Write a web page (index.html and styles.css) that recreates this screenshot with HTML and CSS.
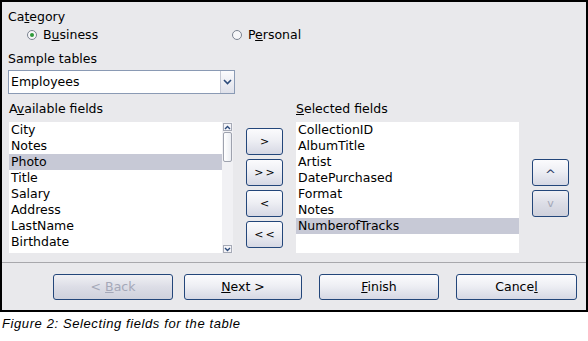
FILE: index.html
```html
<!DOCTYPE html>
<html>
<head>
<meta charset="utf-8">
<link rel="stylesheet" href="styles.css">
</head>
<body>
<div class="dialog">
  <div class="content">
    <div class="label">Ca<u>t</u>egory</div>
    <div class="radios">
      <div class="radio first"><span class="dot on"></span><span>B<u>u</u>siness</span></div>
      <div class="radio"><span class="dot"></span><span>P<u>e</u>rsonal</span></div>
    </div>
    <div class="label sample">Sample tables</div>
    <div class="select">
      <span class="value">Employees</span>
      <span class="sbtn"><svg width="9" height="6" viewBox="0 0 9 6"><path d="M1 1 L4.5 4.5 L8 1" fill="none" stroke="#2b4a7a" stroke-width="1.6"/></svg></span>
    </div>
    <div class="fields">
      <div class="label">A<u>v</u>ailable fields</div>
      <div></div>
      <div class="label"><u>S</u>elected fields</div>
      <div></div>
      <div class="list left">
        <div class="items">
          <div class="item">City</div>
          <div class="item">Notes</div>
          <div class="item sel">Photo</div>
          <div class="item">Title</div>
          <div class="item">Salary</div>
          <div class="item">Address</div>
          <div class="item">LastName</div>
          <div class="item">Birthdate</div>
        </div>
        <div class="scroll">
          <div class="arrow"><svg width="7" height="5" viewBox="0 0 7 5"><path d="M1 4 L3.5 1.5 L6 4" fill="none" stroke="#2b4a7a" stroke-width="1.4"/></svg></div>
          <div class="thumb"></div>
          <div class="track"></div>
          <div class="arrow"><svg width="7" height="5" viewBox="0 0 7 5"><path d="M1 1 L3.5 3.5 L6 1" fill="none" stroke="#2b4a7a" stroke-width="1.4"/></svg></div>
        </div>
      </div>
      <div class="move">
        <div class="btn small"><span>&gt;</span></div>
        <div class="btn small wide"><span>&gt;&gt;</span></div>
        <div class="btn small"><span>&lt;</span></div>
        <div class="btn small wide"><span>&lt;&lt;</span></div>
      </div>
      <div class="list">
        <div class="items">
          <div class="item">CollectionID</div>
          <div class="item">AlbumTitle</div>
          <div class="item">Artist</div>
          <div class="item">DatePurchased</div>
          <div class="item">Format</div>
          <div class="item">Notes</div>
          <div class="item sel">NumberofTracks</div>
        </div>
      </div>
      <div class="order">
        <div class="btn small up"><span>^</span></div>
        <div class="btn small disabled"><span>v</span></div>
      </div>
    </div>
  </div>
  <div class="footer">
    <div class="btn big disabled back"><span>&lt; <u>B</u>ack</span></div>
    <div class="btn big next"><span><u>N</u>ext &gt;</span></div>
    <div class="btn big finish"><span><u>F</u>inish</span></div>
    <div class="btn big cancel"><span>Cance<u>l</u></span></div>
  </div>
</div>
<div class="caption">Figure 2: Selecting fields for the table</div>
</body>
</html>
```

FILE: styles.css
```css
html, body {
  margin: 0;
  padding: 0;
  background: #ffffff;
}

.dialog {
  box-sizing: border-box;
  width: 588px;
  height: 312px;
  border: 2px solid #000;
  background: #e9e9ec;
  display: flex;
  flex-direction: column;
  font-family: "DejaVu Sans", sans-serif;
  font-size: 12.5px;
  line-height: 14px;
  color: #000;
}

u {
  text-decoration: underline;
  text-underline-offset: 1px;
}

.content {
  padding: 8px 0 0 6px;
}

.label {
  height: 14px;
  white-space: nowrap;
}

.radios {
  display: flex;
  margin-top: 4px;
  padding-left: 19px;
  height: 14px;
}

.radio {
  display: flex;
  align-items: center;
  gap: 6px;
}

.radio.first {
  width: 205px;
}

.dot {
  box-sizing: border-box;
  width: 10px;
  height: 10px;
  border-radius: 50%;
  border: 1px solid #7a8290;
  background: #f6f6f8;
  display: flex;
  align-items: center;
  justify-content: center;
}

.dot.on::after {
  content: "";
  width: 4px;
  height: 4px;
  border-radius: 50%;
  background: #2f9a3a;
}

.sample {
  margin-top: 10px;
}

.select {
  box-sizing: border-box;
  margin-top: 4px;
  width: 227px;
  height: 24px;
  border: 1px solid #8a9ab4;
  background: #fff;
  display: flex;
  align-items: stretch;
}

.select .value {
  flex: 1;
  padding-left: 2px;
  line-height: 21px;
}

.sbtn {
  width: 13px;
  border-left: 1px solid #c4c8d4;
  background: linear-gradient(#fbfbfd, #dfe1ea);
  display: flex;
  align-items: center;
  justify-content: center;
}

.fields {
  display: grid;
  grid-template-columns: 224px 37px 223px 37px;
  grid-template-rows: 14px 131px;
  column-gap: 13px;
  row-gap: 6px;
  margin-top: 8px;
  margin-left: 1px;
}

.list {
  background: #fff;
  display: flex;
  overflow: hidden;
}

.items {
  flex: 1;
}

.item {
  height: 16px;
  line-height: 16px;
  padding-left: 2px;
  white-space: nowrap;
}

.item.sel {
  background: #c7c9d6;
}

.scroll {
  width: 11px;
  display: flex;
  flex-direction: column;
  align-items: center;
  padding-top: 1px;
  background: #f1f1f4;
}

.arrow {
  box-sizing: border-box;
  width: 9px;
  height: 8px;
  border: 1px solid #a6aab6;
  background: #f4f4f8;
  display: flex;
  align-items: center;
  justify-content: center;
}

.thumb {
  box-sizing: border-box;
  width: 9px;
  height: 30px;
  margin-top: 1px;
  border: 1px solid #9ea2ae;
  border-radius: 2px;
  background: linear-gradient(90deg, #ffffff, #eceef3);
}

.track {
  flex: 1;
}

.btn {
  box-sizing: border-box;
  border: 1px solid #23467a;
  border-radius: 3px;
  background: linear-gradient(#fbfbfd, #eeeff4 45%, #d6d8e4);
  display: flex;
  align-items: center;
  justify-content: center;
  white-space: nowrap;
}

.btn.small {
  height: 27px;
  font-size: 11px;
}

.btn.wide {
  letter-spacing: 2px;
  padding-left: 2px;
}

.move {
  display: flex;
  flex-direction: column;
  gap: 4px;
  padding-top: 6px;
}

.order {
  display: flex;
  flex-direction: column;
  gap: 4px;
  padding-top: 37px;
}

.btn.up {
  color: #2b3a66;
  font-size: 13px;
  padding-top: 4px;
}

.btn.disabled {
  color: #a4a8b8;
  background: linear-gradient(#f0f0f4, #dcdde6 50%, #cfd1dc);
}

.footer {
  margin-top: auto;
  height: 48px;
  box-sizing: border-box;
  border-top: 1px solid #a8a8ac;
  padding: 11px 0 0 51px;
  display: flex;
  align-items: flex-start;
}

.btn.big {
  width: 120px;
  height: 26px;
}

.btn.next {
  margin-left: 11px;
  width: 118px;
}

.btn.finish {
  margin-left: 17px;
}

.btn.cancel {
  margin-left: 17px;
  width: 121px;
}

.caption {
  margin-top: 4px;
  padding-left: 2px;
  font-family: "Liberation Sans", Arial, sans-serif;
  font-style: italic;
  font-size: 13px;
  line-height: 15px;
  letter-spacing: 0.6px;
  color: #000;
}
```
